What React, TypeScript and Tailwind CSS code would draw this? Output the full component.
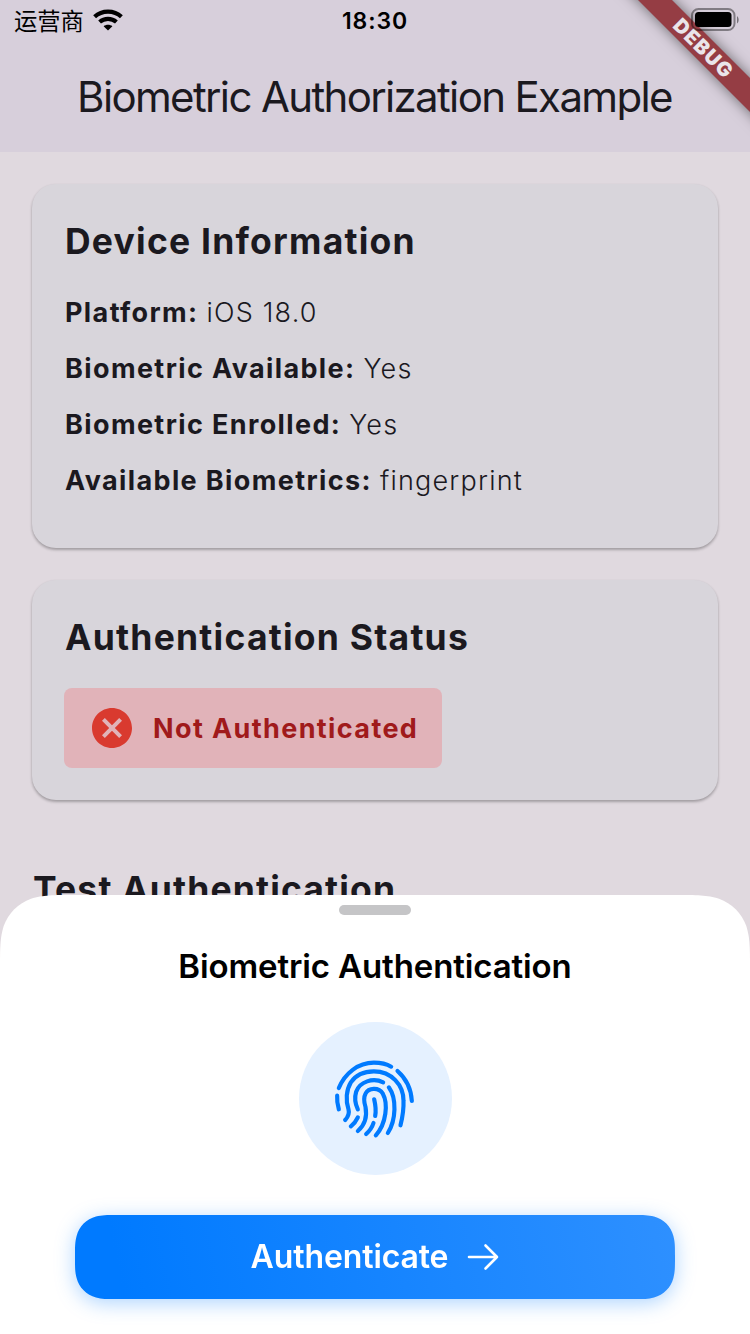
import type { ReactNode } from "react";
import { MdCancel } from "react-icons/md";

const info = [
  { label: "Platform:", value: "iOS 18.0" },
  { label: "Biometric Available:", value: "Yes" },
  { label: "Biometric Enrolled:", value: "Yes" },
  { label: "Available Biometrics:", value: "fingerprint" },
];

function WifiIcon() {
  return (
    <svg width="30" height="22" viewBox="0 0 30 22" fill="none" stroke="#000" strokeWidth="4.2">
      <path d="M1.6 7.8C9 1 21 1 28.400 7.800" />
      <path d="M6.600 13C11.400 8.800 18.600 8.800 23.400 13" />
      <path d="M15 21.400L10.600 17.200C13 15.200 17 15.200 19.400 17.200Z" fill="#000" stroke="none" />
    </svg>
  );
}

function BatteryIcon() {
  return (
    <svg width="48" height="24" viewBox="0 0 48 24">
      <rect x="1" y="1" width="42.500" height="21" rx="6.500" fill="none" stroke="#000" strokeOpacity="0.4" strokeWidth="2" />
      <rect x="4" y="4" width="36.500" height="15" rx="3.500" fill="#000" />
      <path d="M46 8.200C48.200 9.400 48.200 14.200 46 15.400Z" fill="#000" fillOpacity="0.45" />
    </svg>
  );
}

function FingerprintIcon() {
  return (
    <svg
      className="size-full"
      viewBox="27.5 36 459 459"
      fill="none"
      stroke="#007AFF"
      strokeWidth="12.5"
      strokeLinecap="round"
    >
      <path d="M147 234C165 190 205 158 252 158C271 158 289 161 304 170" />
      <path d="M323 183C349 206 364 238 366 273" />
      <path d="M142 257C141 270 143 284 147 298" />
      <path d="M166 330C176 319 179 309 176 298C167 272 169 240 183 217C199 193 224 184 252 184C305 184 341 225 341 272C342 297 338 322 332 346" />
      <path d="M204 298C196 282 194 262 199 245C210 215 249 202 280 217" />
      <path d="M297 232C321 265 319 330 294 369" />
      <path d="M183 349C192 342 199 333 204 322" />
      <path d="M204 363C225 345 232 318 227 291C223 278 221 262 227 251C236 233 267 231 279 251C295 280 290 340 258 376" />
      <path d="M229 372C239 363 247 352 251 339" />
      <path d="M253 268C257 285 259 303 256 318" />
    </svg>
  );
}

function Card({ title, className, children }: { title: string; className: string; children: ReactNode }) {
  return (
    <section
      className={`rounded-[24px] bg-[#d8d5db] px-8 shadow-[0_2px_3px_rgba(0,0,0,0.24),0_1px_3px_rgba(0,0,0,0.08)] ${className}`}
    >
      <h2 className="pt-9 pl-px text-[35.5px] leading-[44px] font-bold tracking-[1.22px]">{title}</h2>
      {children}
    </section>
  );
}

export default function App() {
  return (
    <div className="relative flex h-[1334px] w-[750px] flex-col overflow-hidden bg-[#e0d9df] font-['Inter','Noto_Sans_CJK_SC',sans-serif] text-[#1b191f]">
      <header className="flex h-[152px] flex-col bg-[#d7cfdb]">
        <div className="grid h-10 grid-cols-3 items-center px-[14px] text-black">
          <div className="flex items-center gap-[9px]">
            <span className="font-['Noto_Sans_CJK_SC',sans-serif] text-[23.3px] leading-10 whitespace-nowrap">运营商</span>
            <WifiIcon />
          </div>
          <span className="pt-[2px] text-center text-[23px] font-semibold tracking-[0.9px]">18:30</span>
        </div>
        <h1 className="pt-[31px] pr-px text-center text-[42px] leading-[52px] font-normal tracking-[-1.65px] whitespace-nowrap">
          Biometric Authorization Example
        </h1>
      </header>

      <main className="flex flex-col px-8 pt-8">
        <Card title="Device Information" className="h-[364px]">
          <dl className="flex flex-col pt-[21px] text-[27px] leading-[56px] whitespace-nowrap">
            {info.map((row) => (
              <div key={row.label} className="flex gap-[8px]">
                <dt className="pl-px font-bold tracking-[1.38px]">{row.label}</dt>
                <dd className="font-light tracking-[1.2px]">{row.value}</dd>
              </div>
            ))}
          </dl>
        </Card>
        <Card title="Authentication Status" className="mt-8 h-[220px]">
          <div className="mt-7 flex h-20 w-[378px] items-center gap-[17px] rounded-lg bg-[#e1b3b9] pl-6">
            <MdCancel className="size-12 shrink-0 text-[#d93a2f]" />
            <span className="pt-[2px] text-[27px] font-bold tracking-[1.38px] whitespace-nowrap text-[#a01a1b]">
              Not Authenticated
            </span>
          </div>
        </Card>
        <h2 className="pt-[68px] pl-px text-[35.5px] leading-[44px] font-bold tracking-[1.15px]">
          Test Authentication
        </h2>
      </main>

      <div className="absolute top-0 right-0 h-[200px] w-[200px] overflow-hidden">
        <div className="absolute top-[35px] left-[2px] flex h-6 w-[300px] rotate-45 items-center justify-center bg-[#953d44] pl-1 text-[20px] leading-6 font-black tracking-[1.2px] text-[#eae5ea] shadow-[0_0_14px_rgba(0,0,0,0.5)]">
          DEBUG
        </div>
      </div>
      <div className="absolute top-[8px] left-[691px]">
        <BatteryIcon />
      </div>

      <div className="absolute top-[895px] left-0 flex h-[439px] w-[750px] flex-col items-center bg-white text-black [clip-path:path('M0_75C0_53_0_43_3.700_31C8.300_18.300_18.300_8.300_31_3.700C43_0_53_0_75_0L675_0C697_0_707_0_719_3.700C731.700_8.300_741.700_18.300_746.300_31C750_43_750_53_750_75L750_439L0_439Z')]">
        <div className="mt-[10px] h-[10px] w-[72px] rounded-full bg-[#c5c5c7]" />
        <h2 className="mt-[30px] text-[33px] leading-[42px] font-semibold tracking-[-0.12px] whitespace-nowrap">Biometric Authentication</h2>
        <div className="mt-[35px] size-[153px] rounded-full bg-[#e5f1ff]">
          <FingerprintIcon />
        </div>
        <div className="mt-10 drop-shadow-[0_4px_10px_rgba(0,122,255,0.32)]">
          <button className="flex h-[84px] w-[600px] items-center justify-center gap-5 bg-[linear-gradient(78deg,#007aff_8%,#2e90ff)] text-white [clip-path:path('M0_42C0_31_0_27_1.600_21C4_11.500_11.500_4_21_1.600C27_0_31_0_42_0L558_0C569_0_573_0_579_1.600C588.500_4_596_11.500_598.400_21C600_27_600_31_600_42C600_53_600_57_598.400_63C596_72.500_588.500_80_579_82.400C573_84_569_84_558_84L42_84C31_84_27_84_21_82.400C11.500_80_4_72.500_1.600_63C0_57_0_53_0_42Z')]">
            <span className="text-[32px] font-semibold tracking-[-0.12px]">Authenticate</span>
            <svg className="-ml-px" width="32" height="28" viewBox="0 0 32 28" fill="none" stroke="#fff" strokeWidth="2.600" strokeLinecap="round" strokeLinejoin="round">
              <path d="M2 14H30M18.500 2.500L30 14L18.500 25.500" />
            </svg>
          </button>
        </div>
      </div>
    </div>
  );
}
